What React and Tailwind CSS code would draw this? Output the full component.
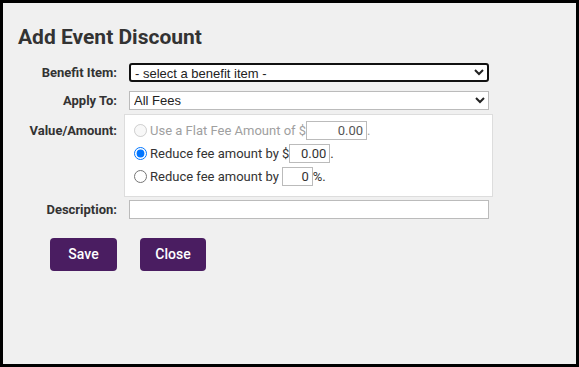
export default function App() {
  const label = "w-[99px] shrink-0 text-right text-[13px] font-bold text-[#333]";
  const num = "h-[19px] border border-[#bbb] bg-white text-right pr-[3px] text-[13px] text-[#333] font-['Roboto',sans-serif]";
  return (
    <div className="w-[579px] h-[367px] border-[3px] border-black bg-[#f0f0f0] font-['Roboto',sans-serif] text-[#333] pl-[15px] pt-[22px]">
      <h2 className="text-[21px] leading-[24px] font-bold text-[#333]">Add Event Discount</h2>

      <div className="flex items-center mt-[14px]">
        <div className={label}>Benefit Item:</div>
        <select className="ml-[12px] w-[360px] h-[19px] bg-white border-2 border-[#111] rounded-[3px] text-[13px] text-[#222] font-['Liberation_Sans',Arial,sans-serif] pl-0">
          <option>- select a benefit item -</option>
        </select>
      </div>

      <div className="flex items-center mt-[8px]">
        <div className={label}>Apply To:</div>
        <select className="ml-[12px] w-[360px] h-[19px] bg-white border border-[#bbb] text-[13px] text-[#222] font-['Liberation_Sans',Arial,sans-serif] pl-0">
          <option>All Fees</option>
        </select>
      </div>

      <div className="flex items-start mt-[4px]">
        <div className={`${label} pt-[7px]`}>Value/Amount:</div>
        <div className="ml-[7px] w-[369px] h-[83px] bg-white border border-[#ddd] pl-[9px] pt-[4px] text-[13px]">
          <label className="flex items-center h-[23px] text-[#a0a0a0]">
            <input type="radio" name="v" disabled className="w-[13px] h-[13px] m-0" />
            <span className="ml-[3px]">Use a Flat Fee Amount of $</span>
            <input disabled defaultValue="0.00" className={`${num} w-[61px] bg-[#f7f7f7] text-[#555]`} />
            <span>.</span>
          </label>
          <label className="flex items-center h-[23px]">
            <input type="radio" name="v" defaultChecked className="w-[13px] h-[13px] m-0" />
            <span className="ml-[3px]">Reduce fee amount by $</span>
            <input defaultValue="0.00" className={`${num} w-[41px]`} />
            <span>.</span>
          </label>
          <label className="flex items-center h-[23px]">
            <input type="radio" name="v" className="w-[13px] h-[13px] m-0" />
            <span className="ml-[3px] mr-[3px]">Reduce fee amount by</span>
            <input defaultValue="0" className={`${num} w-[31px]`} />
            <span>%.</span>
          </label>
        </div>
      </div>

      <div className="flex items-center mt-[3px]">
        <div className={label}>Description:</div>
        <input className="ml-[12px] w-[360px] h-[19px] bg-white border border-[#bbb]" />
      </div>

      <div className="flex gap-[23px] mt-[18px] ml-[32px]">
        <button className="w-[67px] h-[33px] rounded-[4px] bg-[#4a1d61] text-white text-[14px] font-medium">Save</button>
        <button className="w-[66px] h-[33px] rounded-[4px] bg-[#4a1d61] text-white text-[14px] font-medium">Close</button>
      </div>
    </div>
  );
}
